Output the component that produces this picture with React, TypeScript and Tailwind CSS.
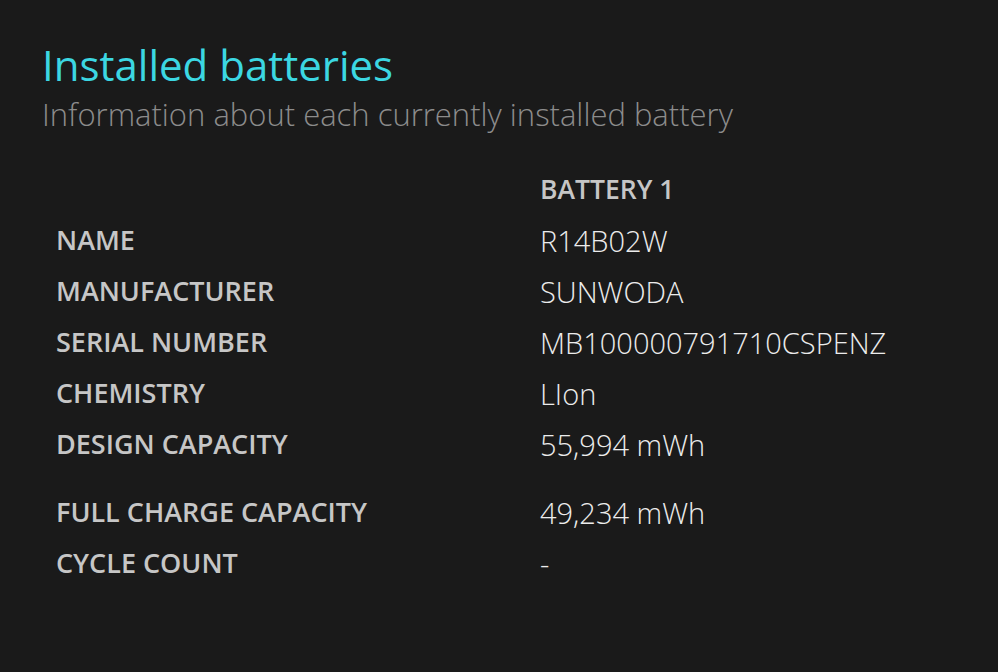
import React from 'react';

const rows: { label: string; value: string; gap?: boolean }[] = [
  { label: 'NAME', value: 'R14B02W' },
  { label: 'MANUFACTURER', value: 'SUNWODA' },
  { label: 'SERIAL NUMBER', value: 'MB100000791710CSPENZ' },
  { label: 'CHEMISTRY', value: 'LIon' },
  { label: 'DESIGN CAPACITY', value: '55,994 mWh' },
  { label: 'FULL CHARGE CAPACITY', value: '49,234 mWh', gap: true },
  { label: 'CYCLE COUNT', value: '-' },
];

export default function App() {
  return (
    <div
      className="w-[998px] h-[672px] bg-[#1a1a1a] overflow-hidden pl-[42px] pt-[40px]"
      style={{ fontFamily: '"Open Sans", "Noto Sans", sans-serif' }}
    >
      <h1 className="text-[42px] leading-[50px] text-[#3cd7e2] font-normal">Installed batteries</h1>
      <p className="mt-[4px] text-[31px] leading-[40px] text-[#8c8c8c] font-light">
        Information about each currently installed battery
      </p>

      <div className="mt-[31px] pl-[14px]">
        <div className="grid grid-cols-[484px_1fr] h-[50px] items-center">
          <div />
          <div className="text-[26.5px] font-semibold text-[#c6c6c6]">BATTERY 1</div>
        </div>
        {rows.map((r) => (
          <div
            key={r.label}
            className={`grid grid-cols-[484px_1fr] h-[51px] items-center ${r.gap ? 'mt-[17px]' : ''}`}
          >
            <div className="text-[27px] font-semibold text-[#c6c6c6]">{r.label}</div>
            <div className="text-[29px] font-light text-[#ececec]">{r.value}</div>
          </div>
        ))}
      </div>
    </div>
  );
}
